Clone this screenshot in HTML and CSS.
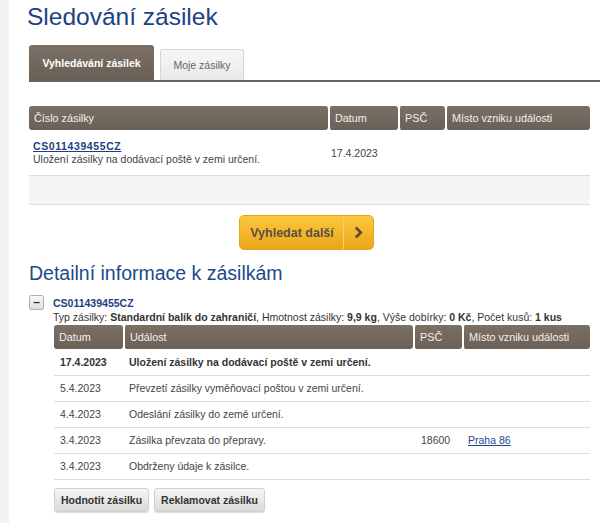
FILE: index.html
```html
<!DOCTYPE html>
<html lang="cs">
<head>
	<meta charset="UTF-8">
	<meta name="viewport" content="width=device-width, initial-scale=1.0">
	<title>Sledování zásilek</title>
	<link rel="stylesheet" href="styles.css">
</head>
<body>

	<div class="strana">
		<main class="obsah">
			<h1>Sledování zásilek</h1>

			<div class="zalozky">
				<a href="#" class="zalozka aktivni">Vyhledávání zásilek</a>
				<a href="#" class="zalozka">Moje zásilky</a>
			</div>

			<table class="tabulka vysledky">
				<thead>
					<tr>
						<th class="sl-cislo">Číslo zásilky</th>
						<th class="sl-datum">Datum</th>
						<th class="sl-psc">PSČ</th>
						<th class="sl-misto">Místo vzniku události</th>
					</tr>
				</thead>
				<tbody>
					<tr class="radek-zasilka">
						<td>
							<a href="#" class="cislo">CS011439455CZ</a>
							<div>Uložení zásilky na dodávací poště v zemi určení.</div>
						</td>
						<td>17.4.2023</td>
						<td></td>
						<td></td>
					</tr>
					<tr class="radek-prazdny">
						<td colspan="4"></td>
					</tr>
				</tbody>
			</table>

			<div class="dalsi">
				<button class="tlacitko-dalsi">
					<span class="text">Vyhledat další</span>
					<span class="sipka">
						<svg width="9" height="13" viewBox="0 0 9 13"><path d="M1.8 1.5 L6.8 6.5 L1.8 11.5" fill="none" stroke="#5a4a36" stroke-width="2.6"/></svg>
					</span>
				</button>
			</div>

			<h2>Detailní informace k zásilkám</h2>

			<div class="detail">
				<div class="detail-hlava">
					<button class="sbalit">&ndash;</button>
					<span class="detail-cislo">CS011439455CZ</span>
				</div>
				<p class="typ">Typ zásilky: <b>Standardní balík do zahraničí</b>, Hmotnost zásilky: <b>9,9 kg</b>, Výše dobírky: <b>0 Kč</b>, Počet kusů: <b>1 kus</b></p>

				<table class="tabulka udalosti">
					<thead>
						<tr>
							<th class="sl2-datum">Datum</th>
							<th class="sl2-udalost">Událost</th>
							<th class="sl2-psc">PSČ</th>
							<th class="sl2-misto">Místo vzniku události</th>
						</tr>
					</thead>
					<tbody>
						<tr class="posledni">
							<td>17.4.2023</td>
							<td>Uložení zásilky na dodávací poště v zemi určení.</td>
							<td></td>
							<td></td>
						</tr>
						<tr>
							<td>5.4.2023</td>
							<td>Převzetí zásilky vyměňovací poštou v zemi určení.</td>
							<td></td>
							<td></td>
						</tr>
						<tr>
							<td>4.4.2023</td>
							<td>Odeslání zásilky do země určení.</td>
							<td></td>
							<td></td>
						</tr>
						<tr>
							<td>3.4.2023</td>
							<td>Zásilka převzata do přepravy.</td>
							<td>18600</td>
							<td><a href="#" class="misto">Praha 86</a></td>
						</tr>
						<tr>
							<td>3.4.2023</td>
							<td>Obdrženy údaje k zásilce.</td>
							<td></td>
							<td></td>
						</tr>
					</tbody>
				</table>

				<div class="akce">
					<button class="tlacitko">Hodnotit zásilku</button>
					<button class="tlacitko">Reklamovat zásilku</button>
				</div>
			</div>
		</main>
	</div>

</body>
</html>
```

FILE: styles.css
```css
body{
	margin: 0;
	padding: 0;
	background: #f2f2f2;
	font-family: "Liberation Sans", Arial, sans-serif;
	color: #333;
}

.strana{
	margin-left: 9px;
	background: #fff;
	min-height: 523px;
	overflow: hidden;
}

.obsah{
	padding-left: 20px;
}

h1{
	margin: 0;
	padding-top: 2px;
	margin-left: -2px;
	font-size: 24.5px;
	font-weight: normal;
	color: #1b4283;
	line-height: 30px;
}

h2{
	margin: 12px 0 0 0;
	font-size: 19.5px;
	font-weight: normal;
	color: #1b4a8c;
	line-height: 22px;
}

/* zalozky */
.zalozky{
	margin-top: 13px;
	display: flex;
	align-items: flex-end;
	gap: 6px;
	border-bottom: 2px solid #6d6258;
	height: 35px;
}

.zalozka{
	display: flex;
	align-items: center;
	justify-content: center;
	font-size: 10.5px;
	text-decoration: none;
	border-radius: 3px 3px 0 0;
}

.zalozka.aktivni{
	width: 125px;
	height: 35px;
	background: linear-gradient(#7d7167, #6a5f55);
	color: #fff;
	font-weight: bold;
}

.zalozka:not(.aktivni){
	width: 82px;
	height: 30px;
	background: linear-gradient(#f7f7f7, #e9e9e9);
	border: 1px solid #d6d6d6;
	border-bottom: none;
	color: #666;
}

/* tabulky */
.tabulka{
	border-collapse: separate;
	border-spacing: 0;
	font-size: 10.5px;
	line-height: 13px;
	width: 561px;
}

.tabulka th{
	background: linear-gradient(#7b7066, #6b6057);
	color: #f3f0ec;
	font-weight: normal;
	font-size: 10.8px;
	text-align: left;
	height: 24px;
	padding: 0 5px;
	border-radius: 3px;
	border-left: 2px solid #fff;
	box-sizing: border-box;
}

.tabulka th:first-child{
	border-left: none;
}

.vysledky{
	margin-top: 24px;
}

.sl-cislo{ width: 299px; }
.sl-datum{ width: 70px; }
.sl-psc{ width: 47px; }

.vysledky td{
	padding: 0 4px;
	vertical-align: middle;
	border-bottom: 1px solid #dcdcdc;
	color: #444;
}

.radek-zasilka td{
	height: 43px;
}

.radek-zasilka td:nth-child(2){
	padding-left: 3px;
	padding-top: 2px;
}

.cislo{
	color: #1b3f80;
	font-weight: bold;
	font-size: 10.5px;
	letter-spacing: 0.6px;
}

.radek-prazdny td{
	height: 28px;
	background: #f5f5f5;
}

/* tlacitko vyhledat */
.dalsi{
	display: flex;
	justify-content: center;
	margin-top: 10px;
	width: 555px;
}

.tlacitko-dalsi{
	display: flex;
	align-items: stretch;
	height: 35px;
	padding: 0;
	border: 1px solid #e4a615;
	border-radius: 5px;
	background: linear-gradient(#fbc83f, #eca51a);
	font-family: inherit;
	font-size: 12.5px;
	font-weight: bold;
	color: #5b5042;
	cursor: pointer;
}

.tlacitko-dalsi .text{
	display: flex;
	align-items: center;
	padding: 0 9px 0 10px;
	border-right: 1px solid #f7cf6b;
}

.tlacitko-dalsi .sipka{
	display: flex;
	align-items: center;
	padding: 0 10px 0 10px;
}

/* detail */
.detail{
	margin-top: 11px;
}

.detail-hlava{
	display: flex;
	align-items: center;
	gap: 9px;
}

.sbalit{
	width: 15px;
	height: 15px;
	padding: 0;
	border: 1px solid #b0b0b0;
	border-radius: 2px;
	background: linear-gradient(#fafafa, #dcdcdc);
	font-family: inherit;
	font-size: 12px;
	font-weight: bold;
	line-height: 11px;
	color: #333;
}

.detail-cislo{
	color: #1b3f80;
	font-weight: bold;
	font-size: 10.5px;
}

.typ{
	margin: 0 0 0 24px;
	font-size: 10.5px;
	line-height: 14px;
}

.udalosti{
	margin: 1px 0 0 25px;
	width: 536px;
}

.sl2-datum{ width: 69px; }
.sl2-udalost{ width: 290px; }
.sl2-psc{ width: 49px; }

.udalosti td{
	height: 25px;
	padding: 0 6px;
	border-bottom: 1px solid #dcdcdc;
	color: #444;
}

.udalosti .posledni td{
	font-weight: bold;
	color: #333;
	height: 26px;
}

.udalosti td:nth-child(3){
	padding-left: 8px;
}

.misto{
	color: #1b4a8c;
}

.akce{
	margin: 8px 0 0 25px;
	display: flex;
	gap: 5px;
}

.tlacitko{
	height: 24px;
	padding: 0 6px;
	border: 1px solid #d0d0d0;
	border-radius: 3px;
	background: linear-gradient(#f5f5f5, #dadada);
	box-shadow: 0 1px 1px rgba(0,0,0,0.15);
	font-family: inherit;
	font-size: 10.5px;
	font-weight: bold;
	color: #333;
}
```
